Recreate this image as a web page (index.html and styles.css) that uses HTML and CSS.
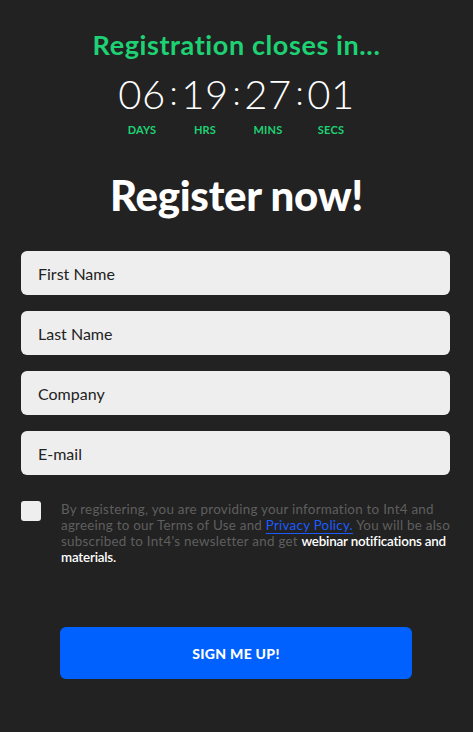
FILE: index.html
```html
<!DOCTYPE html>
<html lang="en">
<head>
  <meta charset="UTF-8">
  <title>Register</title>
  <link rel="stylesheet" href="styles.css">
</head>
<body>

  <!-- Countdown -->
  <div class="countdown">
    <h2>Registration closes in...</h2>
    <div class="timer">
      <div class="unit"><span class="num">06</span><span class="label">DAYS</span></div>
      <span class="colon">:</span>
      <div class="unit"><span class="num">19</span><span class="label">HRS</span></div>
      <span class="colon">:</span>
      <div class="unit"><span class="num">27</span><span class="label">MINS</span></div>
      <span class="colon">:</span>
      <div class="unit"><span class="num">01</span><span class="label">SECS</span></div>
    </div>
  </div>

  <h1>Register now!</h1>

  <!-- Form -->
  <form class="register-form">
    <input type="text" placeholder="First Name">
    <input type="text" placeholder="Last Name">
    <input type="text" placeholder="Company">
    <input type="email" placeholder="E-mail">

    <label class="consent">
      <input type="checkbox">
      <span class="box"></span>
      <span class="consent-text">
        By registering, you are providing your information to Int4 and agreeing to our Terms of Use and <a href="#">Privacy Policy.</a> You will be also subscribed to Int4's newsletter and get <strong>webinar notifications and materials.</strong>
      </span>
    </label>

    <button type="button">SIGN ME UP!</button>
  </form>

</body>
</html>
```

FILE: styles.css
```css
body {
  margin: 0;
  padding: 0;
  background-color: #222222;
  font-family: Lato, "Open Sans", sans-serif;
  color: #ffffff;
}

.countdown {
  padding-top: 30px;
  text-align: center;
}

.countdown h2 {
  margin: 0;
  font-size: 27px;
  font-weight: bold;
  color: #1ed274;
  line-height: 30px;
  letter-spacing: 0.6px;
}

.timer {
  display: flex;
  justify-content: center;
  align-items: flex-start;
  margin-top: 14px;
}

.unit {
  display: flex;
  flex-direction: column;
  align-items: center;
  width: 52px;
}

.num {
  font-size: 40px;
  font-weight: 300;
  line-height: 40px;
  letter-spacing: 0.5px;
}

.colon {
  font-size: 34px;
  font-weight: 300;
  line-height: 36px;
  width: 11px;
  text-align: center;
}

.label {
  margin-top: 9px;
  font-size: 11px;
  font-weight: bold;
  color: #1ed274;
  letter-spacing: 0.2px;
}

h1 {
  margin: 37px 0 0;
  text-align: center;
  font-size: 42px;
  font-weight: 900;
  line-height: 44px;
  letter-spacing: -0.3px;
}

.register-form {
  display: flex;
  flex-direction: column;
  gap: 16px;
  padding: 34px 22px 0 21px;
}

.register-form input[type="text"],
.register-form input[type="email"] {
  height: 44px;
  margin-right: 1px;
  box-sizing: border-box;
  border: none;
  border-radius: 6px;
  background-color: #eeeeee;
  padding: 0 17px;
  font-family: Lato, "Open Sans", sans-serif;
  font-size: 16px;
}

.register-form input::placeholder {
  color: #222222;
}

.consent {
  display: flex;
  align-items: flex-start;
  gap: 20px;
  margin-top: 10px;
}

.consent input {
  display: none;
}

.consent .box {
  flex: none;
  width: 20px;
  height: 20px;
  border-radius: 3px;
  background-color: #eeeeee;
}

.consent-text {
  font-size: 13.4px;
  line-height: 16px;
  letter-spacing: 0.25px;
  color: #5f5f5f;
}

.consent-text a {
  color: #1a5cff;
  text-decoration: underline;
  text-underline-offset: 3px;
}

.consent-text strong {
  color: #ffffff;
  font-weight: 600;
  letter-spacing: -0.2px;
}

button {
  align-self: center;
  width: 352px;
  height: 52px;
  margin: 46px 0 0 0;
  border: none;
  border-radius: 6px;
  background-color: #0061ff;
  color: #ffffff;
  font-family: Lato, "Open Sans", sans-serif;
  font-size: 14px;
  font-weight: 900;
  letter-spacing: 0.3px;
  cursor: pointer;
}
```
